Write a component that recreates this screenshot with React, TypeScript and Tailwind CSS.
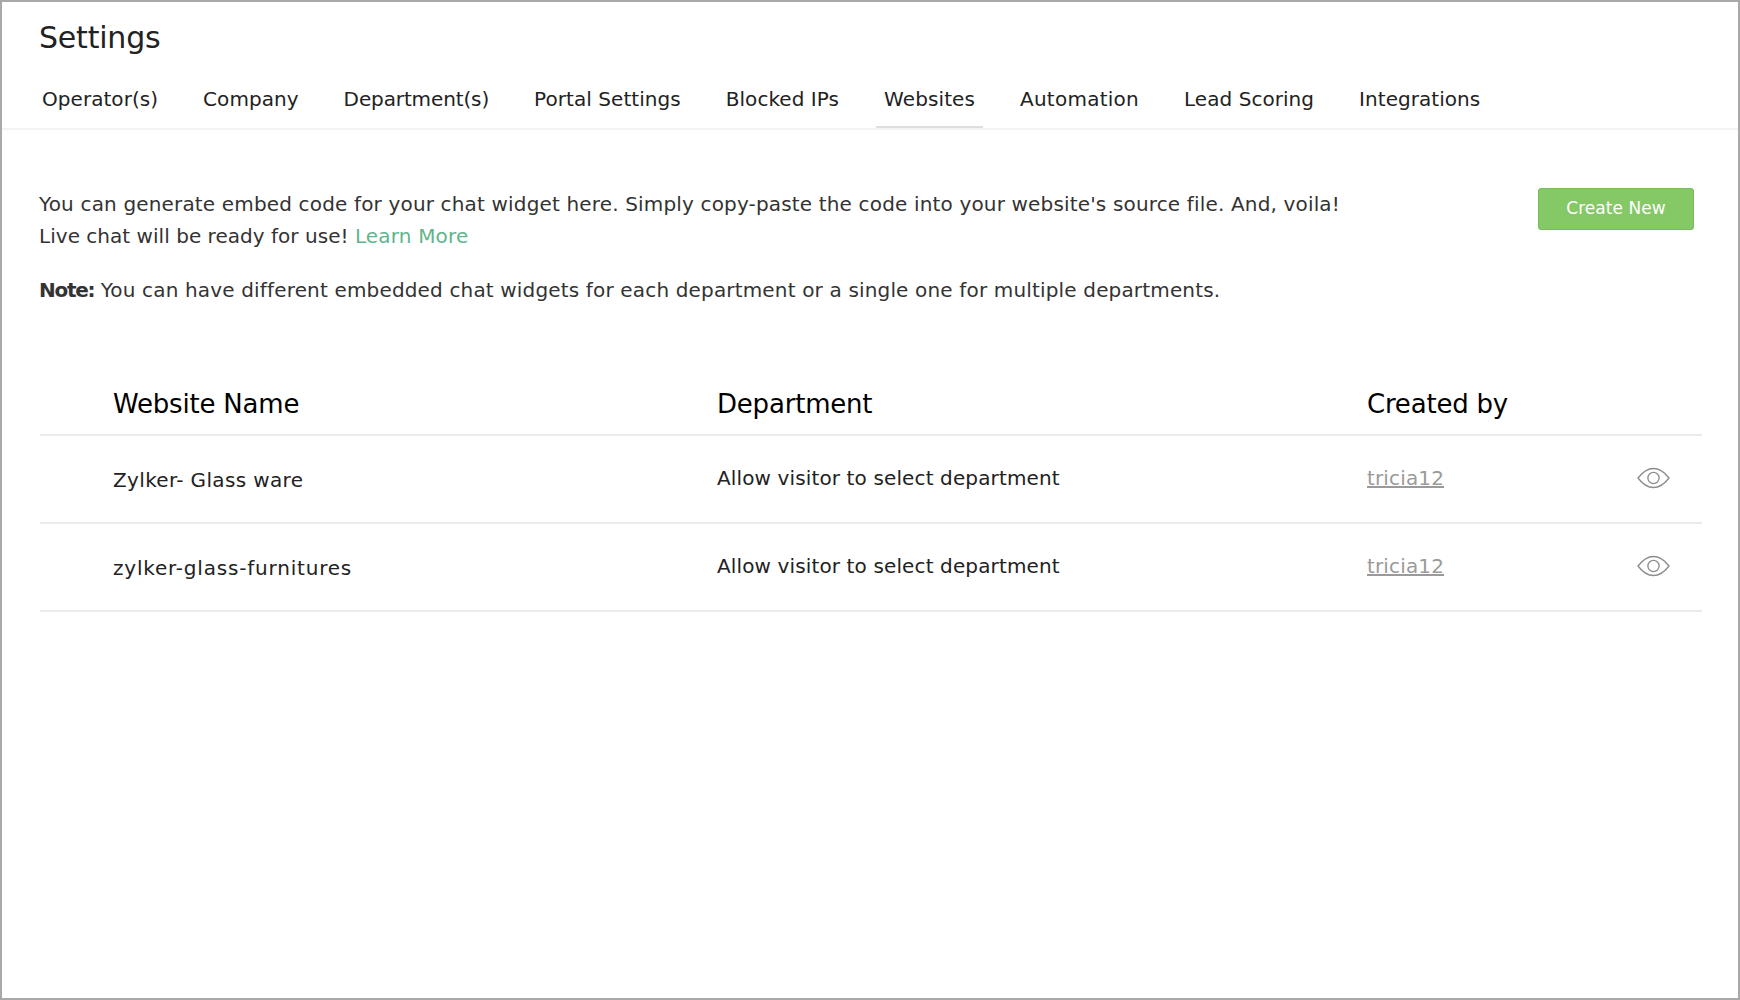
const tabs = [
  { t: "Operator(s)", c: "tracking-[0.05px]" },
  { t: "Company", c: "tracking-[0.05px]" },
  { t: "Department(s)", c: "tracking-[-0.12px]" },
  { t: "Portal Settings", c: "tracking-[0.05px]" },
  { t: "Blocked IPs", c: "tracking-[0.05px]" },
  { t: "Websites", c: "tracking-[0.1px]" },
  { t: "Automation", c: "tracking-[0.25px]" },
  { t: "Lead Scoring", c: "tracking-[0.05px]" },
  { t: "Integrations", c: "tracking-[0.05px]" },
];
const rows = [
  { name: "Zylker- Glass ware", cls: "tracking-[0.35px]" },
  { name: "zylker-glass-furnitures", cls: "tracking-[0.8px]" },
];

function Eye() {
  return (
    <svg width="33" height="22" viewBox="0 0 33 22" fill="none" stroke="#8c8c8c" strokeWidth="1.3" className="block">
      <path d="M1 11 C6 4.5 11 1.5 16.5 1.5 S27 4.5 32 11 C27 17.5 22 20.5 16.5 20.5 S6 17.5 1 11 Z" />
      <circle cx="16.5" cy="11" r="5.6" />
    </svg>
  );
}

export default function App() {
  return (
    <div className="h-[1000px] w-[1740px] overflow-hidden border-2 border-[#a9a9a9] bg-white font-['DejaVu_Sans',sans-serif] text-[#333]">
      <h1 className="pl-[37px] pt-[16px] text-[30px] leading-[40px] tracking-[-0.2px] text-[#222]">Settings</h1>
      <nav className="mt-[12px] flex h-[60px] gap-[29px] border-b-2 border-[#f3f3f3] pl-[32px]">
        {tabs.map(({ t, c }) => (
          <div key={t} className={`h-[58px] px-[8px] pt-[15px] text-[20px] leading-[28px] text-[#222] ${c} ${t === "Websites" ? "border-b-2 border-[#dedede]" : ""}`}>{t}</div>
        ))}
      </nav>
      <section className="flex justify-between pl-[37px] pr-[44px] pt-[58px]">
        <div className="w-[1320px] text-[20px] leading-[32px] tracking-[0.16px]">
          <p>You can generate embed code for your chat widget here. Simply copy-paste the code into your website's source file. And, voila!</p>
          <p className="tracking-[0.03px]">Live chat will be ready for use! <a className="tracking-[0.16px] text-[#5fb58c]">Learn More</a></p>
          <p className="mt-[22px]"><b className="tracking-[-1.3px]">Note:</b> You can have different embedded chat widgets for each department or a single one for multiple departments.</p>
        </div>
        <button className="h-[42px] w-[156px] rounded-[3px] border border-[#76bd5c] bg-[#85c866] text-[17px] tracking-[0.05px] text-white">Create New</button>
      </section>
      <section className="ml-[38px] mt-[82px] w-[1662px]">
        <div className="flex h-[48px] items-start border-b-2 border-[#ebebef] text-[26px] leading-[32px] tracking-[-0.2px] text-black">
          <div className="w-[677px] pl-[73px]">Website Name</div>
          <div className="w-[650px]">Department</div>
          <div>Created by</div>
        </div>
        {rows.map((r) => (
          <div key={r.name} className="flex h-[88px] items-center border-b-2 border-[#ebebef] pb-[2px] text-[20px] text-[#222]">
            <div className={`w-[677px] pl-[73px] pt-[3px] ${r.cls}`}>{r.name}</div>
            <div className="w-[650px] tracking-[0.13px]">Allow visitor to select department</div>
            <a className="w-[270px] tracking-[0.15px] text-[#9a9a9a] underline">tricia12</a>
            <Eye />
          </div>
        ))}
      </section>
    </div>
  );
}
